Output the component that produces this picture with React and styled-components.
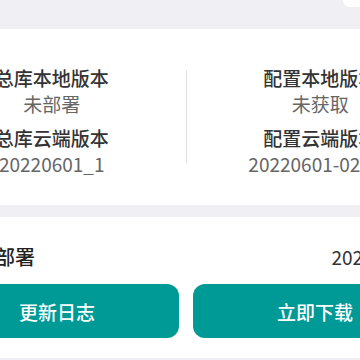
import React from "react";
import styled, { createGlobalStyle } from "styled-components";

const GlobalStyle = createGlobalStyle`
  html, body {
    margin: 0;
    padding: 0;
    background: #f0f0f4;
    overflow: hidden;
  }
  body {
    font-family: "Noto Sans CJK SC", "Noto Sans", sans-serif;
  }
`;

const Page = styled.div`
  width: 536px;
  margin-left: -82px;
  display: flex;
  flex-direction: column;
`;

const TopStrip = styled.div`
  height: 29px;
  display: flex;
  justify-content: flex-end;
  align-items: flex-start;
`;

const TabEdge = styled.div`
  width: 111px;
  height: 7px;
  background: #fff;
  border-bottom-left-radius: 26px;
`;

const Card = styled.section`
  background: #fff;
  padding: ${(p) => p.$pad};
`;

const Gap = styled.div`
  height: 12px;
`;

const VersionRow = styled.div`
  display: flex;
  align-items: flex-start;
`;

const Column = styled.div`
  flex: 1;
  display: flex;
  flex-direction: column;
  align-items: center;
`;

const Divider = styled.div`
  width: 1px;
  height: 93px;
  margin-top: 5px;
  background: #e2e2e2;
`;

const Label = styled.div`
  font-size: 19px;
  line-height: 26px;
  font-weight: 500;
  color: #333;
  white-space: nowrap;
  margin-top: ${(p) => (p.$second ? "8px" : "0")};
`;

const Value = styled.div`
  font-size: 19px;
  line-height: 26px;
  color: #666;
  white-space: nowrap;
`;

const StatusRow = styled.div`
  display: flex;
  justify-content: space-between;
  align-items: center;
  font-size: 19px;
  line-height: 26px;
`;

const StatusText = styled.span`
  color: #222;
  font-weight: 500;
  font-size: 20px;
`;

const StatusDate = styled.span`
  color: #333;
`;

const ButtonRow = styled.div`
  display: flex;
  gap: 14px;
  margin-top: 14px;
`;

const ActionButton = styled.button`
  flex: 1;
  height: 54px;
  border: none;
  border-radius: 12px;
  background: #009a96;
  color: #fff;
  font-family: inherit;
  font-size: 19px;
  font-weight: 500;
  cursor: pointer;
`;

const versions = [
  { local: "总库本地版本", localValue: "未部署", cloud: "总库云端版本", cloudValue: "20220601_1" },
  { local: "配置本地版本", localValue: "未获取", cloud: "配置云端版本", cloudValue: "20220601-02_01" },
];

export default function App() {
  return (
    <>
      <GlobalStyle />
      <Page>
        <TopStrip>
          <TabEdge />
        </TopStrip>
        <Card $pad="36px 0 28px">
          <VersionRow>
            {versions.map((v, i) => (
              <React.Fragment key={v.local}>
                {i > 0 && <Divider />}
                <Column>
                  <Label>{v.local}</Label>
                  <Value>{v.localValue}</Value>
                  <Label $second>{v.cloud}</Label>
                  <Value>{v.cloudValue}</Value>
                </Column>
              </React.Fragment>
            ))}
          </VersionRow>
        </Card>
        <Gap />
        <Card $pad="27px 17px 20px">
          <StatusRow>
            <StatusText>当前未部署</StatusText>
            <StatusDate>20220601_1</StatusDate>
          </StatusRow>
          <ButtonRow>
            <ActionButton>更新日志</ActionButton>
            <ActionButton>立即下载</ActionButton>
          </ButtonRow>
        </Card>
      </Page>
    </>
  );
}
